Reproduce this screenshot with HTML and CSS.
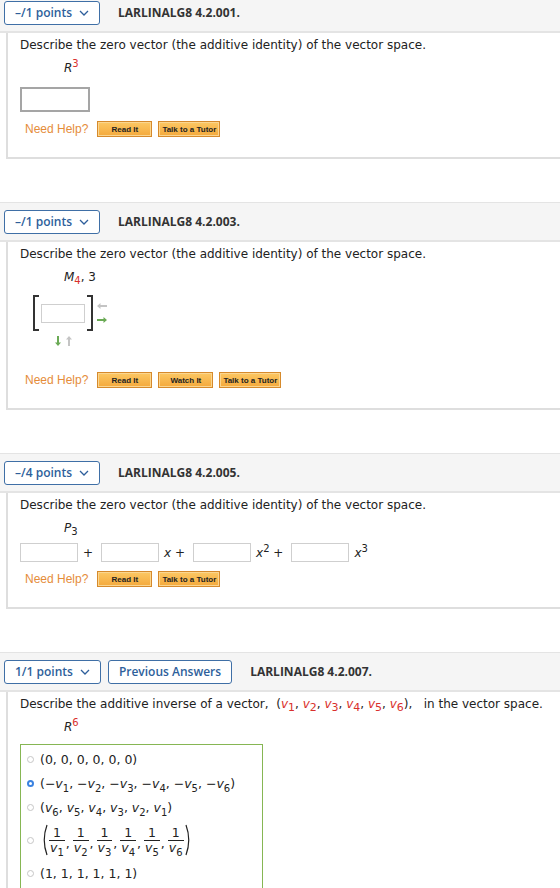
FILE: index.html
```html
<!DOCTYPE html>
<html lang="en">
<head>
    <meta charset="UTF-8">
    <meta name="viewport" content="width=device-width, initial-scale=1.0">
    <title>Assignment</title>
    <link rel="stylesheet" href="styles.css">
</head>
<body>
    <div class="page">

        <!-- question 1 -->
        <div class="question">
            <div class="q-head">
                <button class="points">&ndash;/1 points <svg class="chev" width="10" height="6" viewBox="0 0 10 6"><path d="M1 1 L5 5 L9 1" fill="none" stroke="currentColor" stroke-width="1.3"/></svg></button>
                <span class="q-id">LARLINALG8 4.2.001.</span>
            </div>
            <div class="q-body">
                <p class="prompt">Describe the zero vector (the additive identity) of the vector space.</p>
                <p class="space"><i>R</i><sup class="red">3</sup></p>
                <input class="answer big" type="text">
                <div class="help">
                    <span class="help-label">Need Help?</span>
                    <button class="help-btn">Read It</button>
                    <button class="help-btn">Talk to a Tutor</button>
                </div>
            </div>
        </div>

        <!-- question 2 -->
        <div class="question">
            <div class="q-head">
                <button class="points">&ndash;/1 points <svg class="chev" width="10" height="6" viewBox="0 0 10 6"><path d="M1 1 L5 5 L9 1" fill="none" stroke="currentColor" stroke-width="1.3"/></svg></button>
                <span class="q-id">LARLINALG8 4.2.003.</span>
            </div>
            <div class="q-body">
                <p class="prompt">Describe the zero vector (the additive identity) of the vector space.</p>
                <p class="space"><i>M</i><sub class="red">4</sub>, 3</p>
                <div class="matrix-row">
                    <div class="matrix">
                        <span class="bracket left"></span>
                        <input class="answer cell" type="text">
                        <span class="bracket right"></span>
                    </div>
                    <div class="col-arrows">
                        <svg width="10" height="6" viewBox="0 0 10 6"><path d="M0 3 L3.5 0 V2 H10 V4 H3.5 V6 Z" fill="#c4c4c4"/></svg>
                        <svg width="10" height="6" viewBox="0 0 10 6"><path d="M10 3 L6.5 0 V2 H0 V4 H6.5 V6 Z" fill="#6aaa55"/></svg>
                    </div>
                </div>
                <div class="row-arrows">
                    <svg width="6" height="10" viewBox="0 0 6 10"><path d="M3 10 L0 6.5 H2 V0 H4 V6.5 H6 Z" fill="#6aaa55"/></svg>
                    <svg width="6" height="10" viewBox="0 0 6 10"><path d="M3 0 L0 3.5 H2 V10 H4 V3.5 H6 Z" fill="#c4c4c4"/></svg>
                </div>
                <div class="help spaced">
                    <span class="help-label">Need Help?</span>
                    <button class="help-btn">Read It</button>
                    <button class="help-btn">Watch It</button>
                    <button class="help-btn">Talk to a Tutor</button>
                </div>
            </div>
        </div>

        <!-- question 3 -->
        <div class="question">
            <div class="q-head">
                <button class="points">&ndash;/4 points <svg class="chev" width="10" height="6" viewBox="0 0 10 6"><path d="M1 1 L5 5 L9 1" fill="none" stroke="currentColor" stroke-width="1.3"/></svg></button>
                <span class="q-id">LARLINALG8 4.2.005.</span>
            </div>
            <div class="q-body">
                <p class="prompt">Describe the zero vector (the additive identity) of the vector space.</p>
                <p class="space"><i>P</i><sub>3</sub></p>
                <div class="poly">
                    <input class="answer coef" type="text">
                    <span class="op">+</span>
                    <input class="answer coef" type="text">
                    <span class="op"><i>x</i> +</span>
                    <input class="answer coef" type="text">
                    <span class="op"><i>x</i><sup>2</sup> +</span>
                    <input class="answer coef" type="text">
                    <span class="op"><i>x</i><sup>3</sup></span>
                </div>
                <div class="help">
                    <span class="help-label">Need Help?</span>
                    <button class="help-btn">Read It</button>
                    <button class="help-btn">Talk to a Tutor</button>
                </div>
            </div>
        </div>

        <!-- question 4 -->
        <div class="question">
            <div class="q-head">
                <button class="points">1/1 points <svg class="chev" width="10" height="6" viewBox="0 0 10 6"><path d="M1 1 L5 5 L9 1" fill="none" stroke="currentColor" stroke-width="1.3"/></svg></button>
                <button class="points prev">Previous Answers</button>
                <span class="q-id">LARLINALG8 4.2.007.</span>
            </div>
            <div class="q-body">
                <p class="prompt">Describe the additive inverse of a vector,&nbsp; (<i class="red">v</i><sub class="red">1</sub>, <i class="red">v</i><sub class="red">2</sub>, <i class="red">v</i><sub class="red">3</sub>, <i class="red">v</i><sub class="red">4</sub>, <i class="red">v</i><sub class="red">5</sub>, <i class="red">v</i><sub class="red">6</sub>),&nbsp;&nbsp; in the vector space.</p>
                <p class="space"><i>R</i><sup class="red">6</sup></p>
                <div class="choices">
                    <div class="choice"><span class="radio"></span><span>(0, 0, 0, 0, 0, 0)</span></div>
                    <div class="choice"><span class="radio on"></span><span>(&minus;<i>v</i><sub>1</sub>, &minus;<i>v</i><sub>2</sub>, &minus;<i>v</i><sub>3</sub>, &minus;<i>v</i><sub>4</sub>, &minus;<i>v</i><sub>5</sub>, &minus;<i>v</i><sub>6</sub>)</span></div>
                    <div class="choice"><span class="radio"></span><span>(<i>v</i><sub>6</sub>, <i>v</i><sub>5</sub>, <i>v</i><sub>4</sub>, <i>v</i><sub>3</sub>, <i>v</i><sub>2</sub>, <i>v</i><sub>1</sub>)</span></div>
                    <div class="choice tall">
                        <span class="radio"></span>
                        <svg class="paren" width="7" height="32" viewBox="0 0 7 32"><path d="M6 1 Q0.5 16 6 31" fill="none" stroke="#222" stroke-width="1.2"/></svg>
                        <span class="frac"><span>1</span><span class="den"><i>v</i><sub>1</sub></span></span><span class="comma">,</span>
                        <span class="frac"><span>1</span><span class="den"><i>v</i><sub>2</sub></span></span><span class="comma">,</span>
                        <span class="frac"><span>1</span><span class="den"><i>v</i><sub>3</sub></span></span><span class="comma">,</span>
                        <span class="frac"><span>1</span><span class="den"><i>v</i><sub>4</sub></span></span><span class="comma">,</span>
                        <span class="frac"><span>1</span><span class="den"><i>v</i><sub>5</sub></span></span><span class="comma">,</span>
                        <span class="frac"><span>1</span><span class="den"><i>v</i><sub>6</sub></span></span>
                        <svg class="paren" width="7" height="32" viewBox="0 0 7 32"><path d="M1 1 Q6.5 16 1 31" fill="none" stroke="#222" stroke-width="1.2"/></svg>
                    </div>
                    <div class="choice"><span class="radio"></span><span>(1, 1, 1, 1, 1, 1)</span></div>
                </div>
            </div>
        </div>

    </div>
</body>
</html>
```

FILE: styles.css
```css
body {
    font-family: "DejaVu Sans", Verdana, sans-serif;
    font-size: 12px;
    color: #222;
    background-color: white;
    margin: 0;
    padding: 0;
}

.page {
    margin-top: -7px;
}

.question {
    margin-bottom: 43px;
}

.red {
    color: #d9302c;
}

/* grey bar on top of every question */
.q-head {
    display: flex;
    align-items: center;
    height: 37px;
    padding: 0 4px;
    background-color: #f5f5f5;
    border-top: 1px solid #e4e4e4;
    border-bottom: 2px solid #e4e4e4;
}

.points {
    display: flex;
    align-items: center;
    gap: 7px;
    height: 24px;
    padding: 0 10px;
    background-color: white;
    border: 1px solid #3f6fa6;
    border-radius: 3px;
    color: #2e5f9b;
    font-family: "Open Sans", sans-serif;
    font-weight: 600;
    font-size: 12px;
}

.points.prev {
    margin-left: 7px;
}

.q-id {
    margin-left: 18px;
    font-family: "Open Sans", sans-serif;
    font-weight: bold;
    font-size: 12px;
    color: #333;
}

/* question body */
.q-body {
    margin-left: 6px;
    padding: 2px 0 20px 12px;
    border-left: 2px solid #dedede;
    border-bottom: 2px solid #dedede;
}

.prompt {
    margin: 0;
    line-height: 20px;
}

.prompt sub {
    font-size: 11px;
}

.space {
    margin: 2px 0 0 44px;
    line-height: 22px;
}

sup, sub {
    font-size: 10px;
    line-height: 0;
}

.answer {
    display: block;
    margin: 0;
    padding: 0;
    box-sizing: border-box;
    background-color: white;
    border: 1px solid #cfcfcf;
}

.answer.big {
    width: 70px;
    height: 25px;
    margin-top: 8px;
    border: 2px solid #a5a5a5;
}

/* matrix answer */
.matrix-row {
    display: flex;
    align-items: center;
    margin: 7px 0 0 13px;
}

.matrix {
    display: flex;
    align-items: center;
    gap: 2px;
}

.bracket {
    width: 4px;
    height: 32px;
    border: 2px solid #333;
}

.bracket.left {
    border-right: none;
}

.bracket.right {
    border-left: none;
}

.answer.cell {
    width: 44px;
    height: 19px;
}

.col-arrows {
    display: flex;
    flex-direction: column;
    gap: 8px;
    margin-left: 4px;
}

.row-arrows {
    display: flex;
    gap: 5px;
    margin: 5px 0 0 35px;
    height: 10px;
}

/* polynomial answer */
.poly {
    display: flex;
    align-items: flex-end;
    margin-top: 4px;
}

.answer.coef {
    width: 58px;
    height: 19px;
}

.op {
    padding: 0 8px 1px 5px;
    line-height: 16px;
}

/* help buttons */
.help {
    display: flex;
    align-items: center;
    gap: 6px;
    margin-top: 9px;
    margin-left: 5px;
}

.help.spaced {
    margin-top: 26px;
}

.help-label {
    margin-right: 3px;
    font-family: "Liberation Sans", Arial, sans-serif;
    font-size: 12px;
    color: #e58c3a;
}

.help-btn {
    min-width: 55px;
    height: 16px;
    padding: 0 3px;
    background: linear-gradient(#fcc864, #f4a93c);
    border: 1px solid #d68a2c;
    box-shadow: inset 0 0 0 1px #fbd690;
    font-family: "Liberation Sans", Arial, sans-serif;
    font-weight: bold;
    font-size: 8px;
    color: #222;
}

/* multiple choice */
.choices {
    width: 241px;
    margin-top: 6px;
    padding: 2px 0 4px;
    border: 1px solid #86b653;
    font-size: 12.5px;
}

.choice {
    display: flex;
    align-items: center;
    height: 24px;
    padding-left: 6px;
}

.choice.tall {
    height: 42px;
}

.radio {
    width: 5px;
    height: 5px;
    margin-right: 6px;
    border: 1px solid #c6c6c6;
    border-radius: 50%;
    flex-shrink: 0;
}

.radio.on {
    border: 2px solid #3b82e0;
    width: 3px;
    height: 3px;
}

.paren {
    margin: 0 1px;
}

.frac {
    display: inline-flex;
    flex-direction: column;
    align-items: center;
    line-height: 14px;
}

.frac .den {
    border-top: 1px solid #222;
    padding: 0 1px;
}

.comma {
    align-self: center;
    margin: 6px 3px 0 1px;
}
```
